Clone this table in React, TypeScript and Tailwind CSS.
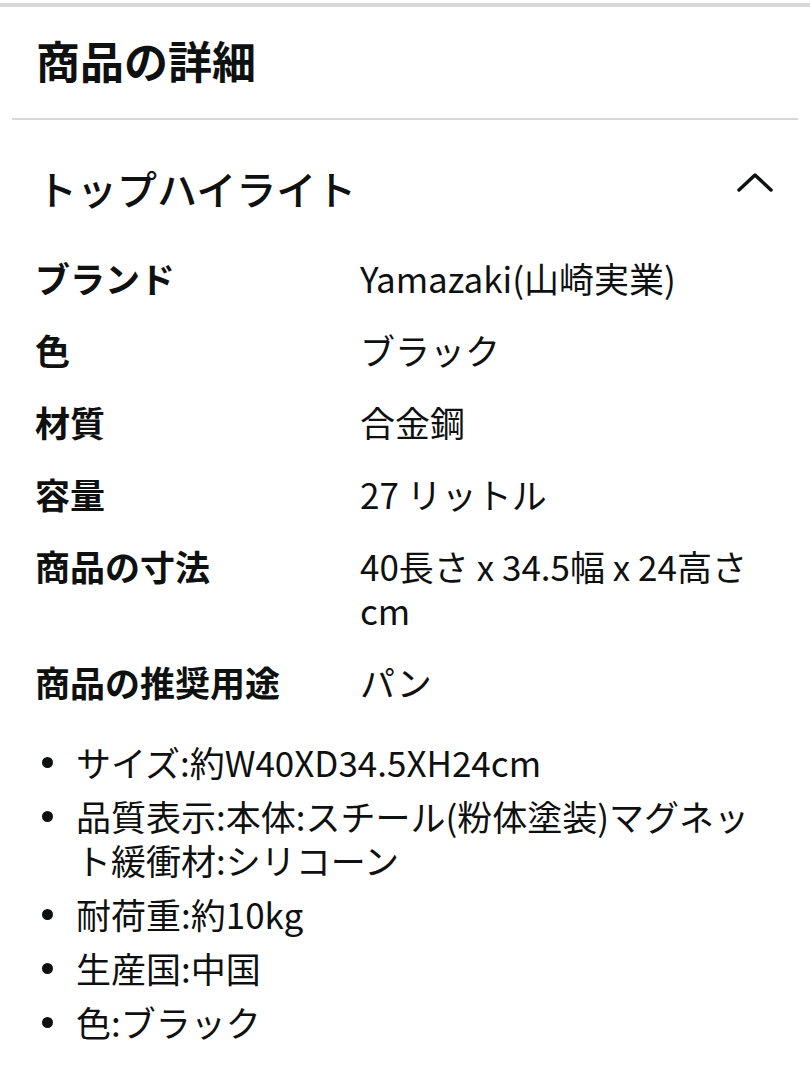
import React from 'react';

const rows: { label: string; value: string }[] = [
  { label: 'ブランド', value: 'Yamazaki(山崎実業)' },
  { label: '色', value: 'ブラック' },
  { label: '材質', value: '合金鋼' },
  { label: '容量', value: '27 リットル' },
  { label: '商品の寸法', value: '40長さ x 34.5幅 x 24高さ cm' },
  { label: '商品の推奨用途', value: 'パン' },
];

const bullets = [
  'サイズ:約W40XD34.5XH24cm',
  '品質表示:本体:スチール(粉体塗装)マグネット緩衝材:シリコーン',
  '耐荷重:約10kg',
  '生産国:中国',
  '色:ブラック',
];

export default function App() {
  return (
    <div
      className="w-[810px] h-[1080px] bg-white text-[#0f1111] overflow-hidden"
      style={{ fontFamily: '"Noto Sans CJK JP", "Noto Sans", sans-serif' }}
    >
      <div className="pt-[3px]">
        <div className="h-[4px] bg-[#d5d9d9]" />
      </div>

      {/* page title */}
      <h1 className="pl-[36px] pt-[31px] pb-[36px] text-[44px] leading-[44px] font-bold">商品の詳細</h1>
      <div className="mx-[12px] h-[2px] bg-[#d5d9d9]" />

      {/* top highlights */}
      <div className="flex items-center justify-between pl-[37px] pr-[36px] pt-[48px]">
        <h2 className="text-[40px] leading-[40px] font-medium">トップハイライト</h2>
        <svg width="38" height="22" viewBox="0 0 38 22" className="-mt-[12px]">
          <polyline points="3,19 19,4 35,19" fill="none" stroke="#0f1111" strokeWidth="3.5" strokeLinecap="round" strokeLinejoin="round" />
        </svg>
      </div>

      <div className="grid grid-cols-[325px_1fr] pl-[35px] pr-[30px] pt-[34px] text-[35px] leading-[44px]">
        {rows.map((r) => (
          <React.Fragment key={r.label}>
            <div className="font-bold py-[14px]">{r.label}</div>
            <div className="py-[14px]">{r.value}</div>
          </React.Fragment>
        ))}
      </div>

      <ul className="pl-[42px] pr-[30px] pt-[22px] flex flex-col gap-[10px] text-[35px] leading-[44px]">
        {bullets.map((b) => (
          <li key={b} className="flex">
            <span className="block w-[11px] h-[11px] rounded-full bg-[#0f1111] mt-[17px] mr-[23px] shrink-0" />
            <span>{b}</span>
          </li>
        ))}
      </ul>
    </div>
  );
}
